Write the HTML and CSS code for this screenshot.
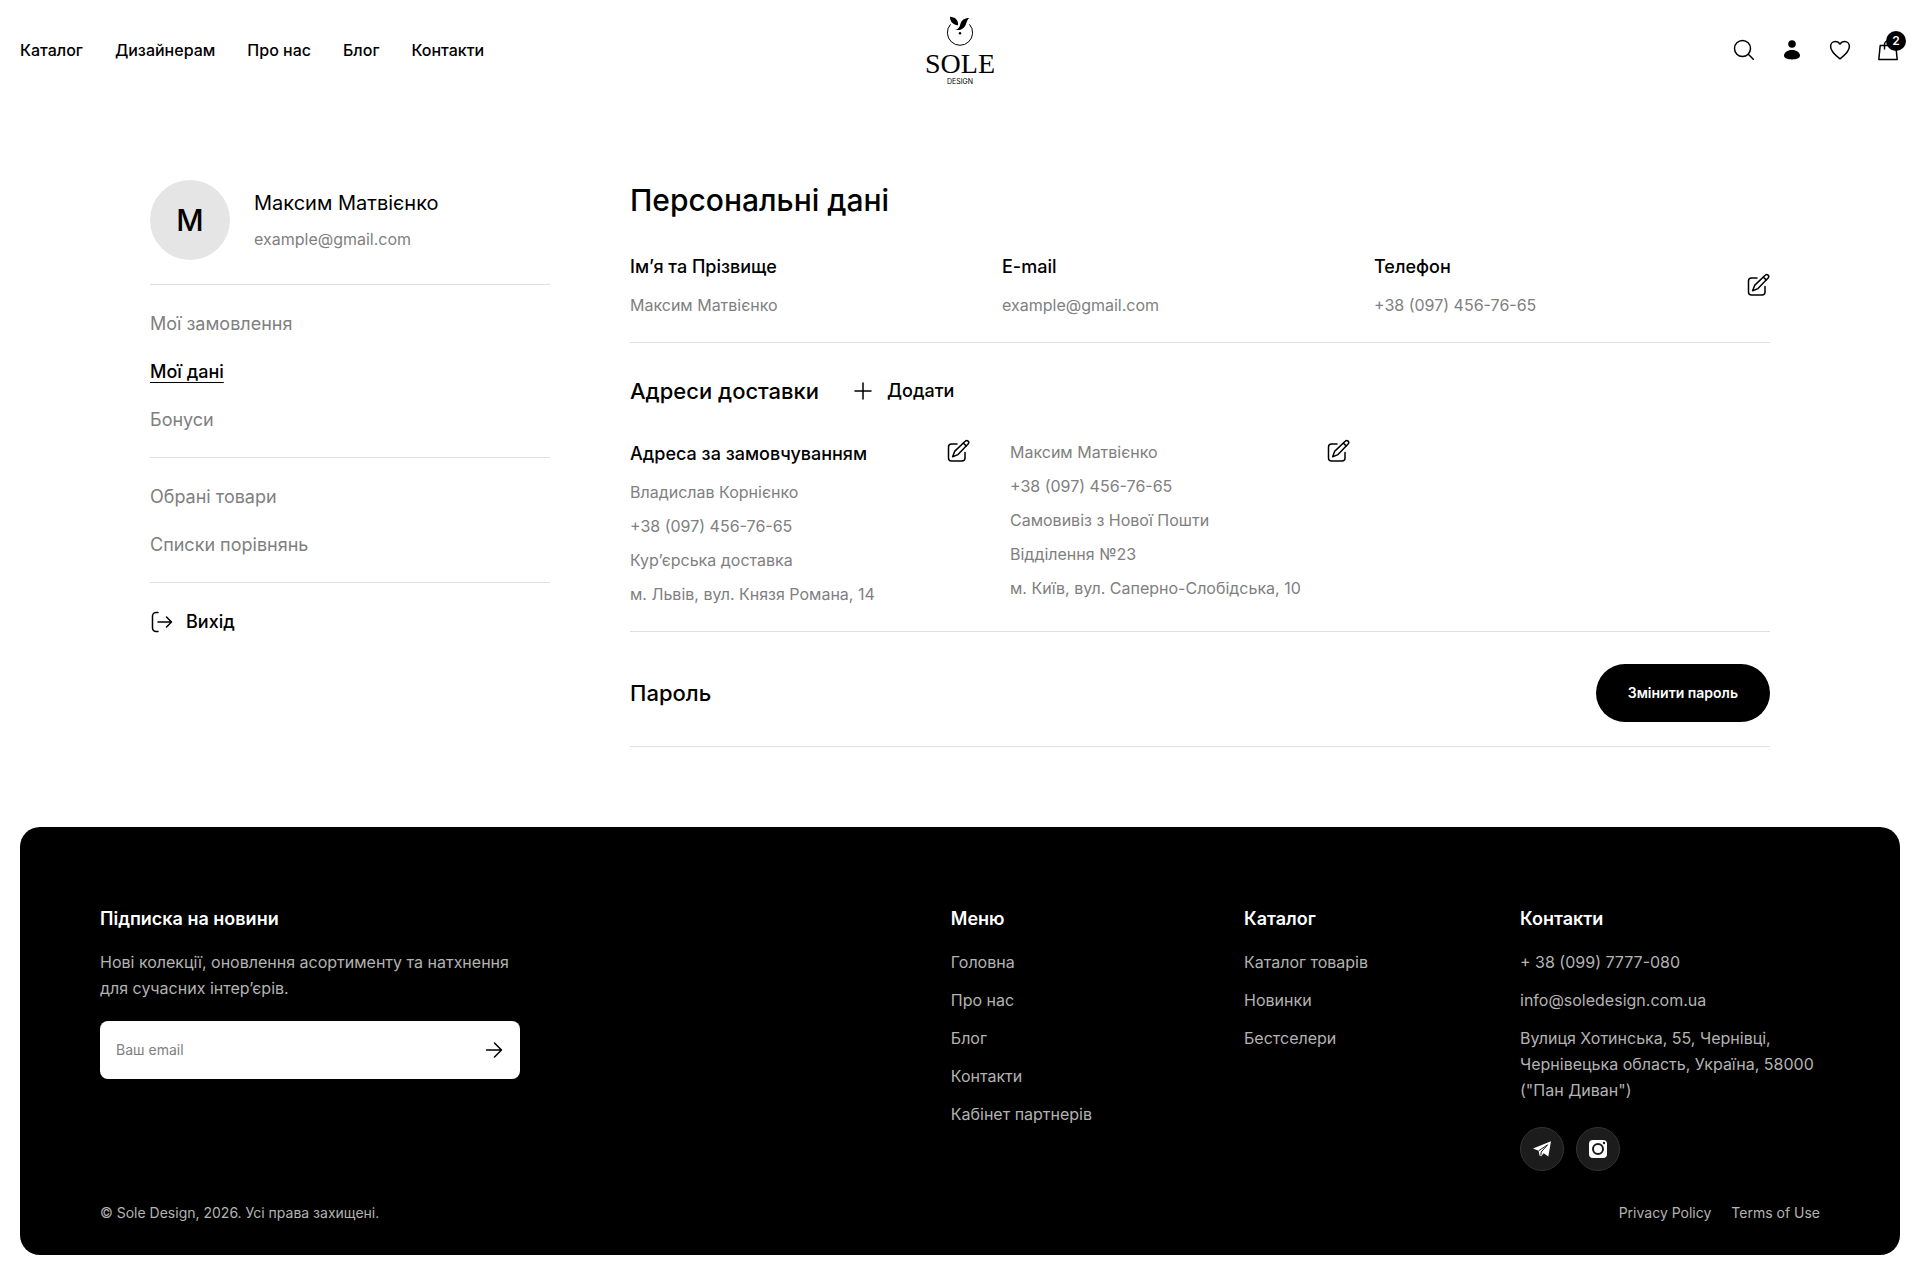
FILE: index.html
```html
<!DOCTYPE html>
<html lang="uk">
<head>
<meta charset="utf-8">
<meta name="viewport" content="width=device-width, initial-scale=1">
<title>Персональні дані — Sole Design</title>
<link rel="stylesheet" href="styles.css">
</head>
<body>
<svg class="sprite" aria-hidden="true">
  <symbol id="icon-edit" viewBox="0 0 24 24">
    <path d="M11 5H5.500A3 3 0 0 0 2.500 8v11a3 3 0 0 0 3 3H16a3 3 0 0 0 3-3v-5.500"/>
    <path d="M19.200 2.200a2 2 0 0 1 2.900 2.800L12 15.600 6.600 17.800 8.600 12.400z"/>
    <path d="M17.400 4.200l2.800 2.700"/>
  </symbol>
</svg>

<header class="header">
  <nav class="nav" aria-label="Головне меню">
    <a href="#">Каталог</a>
    <a href="#">Дизайнерам</a>
    <a href="#">Про нас</a>
    <a href="#">Блог</a>
    <a href="#">Контакти</a>
  </nav>
  <a class="logo" href="#">
    <svg class="logo-mark" viewBox="0 -1 32 35" aria-hidden="true">
      <path d="M6.500 8.400A12.600 12.600 0 1 0 25.500 8.400" fill="none" stroke="#000" stroke-width="1"/>
      <path d="M6 .8c5 .3 8.400 3 8 8.400C9.500 9.300 6 6 6 .8z"/>
      <path d="M25.500 1.900c-2.500 1-2.600 5-4.300 7.800-2 3.500-5.600 5-10.400 4.200 4-.8 4.700-2.900 5.600-6C17.400 4 20.500 1.800 25.500 1.900z"/>
      <circle cx="16" cy="17.300" r="1.200"/>
    </svg>
    <span class="logo-name">SOLE</span>
    <span class="logo-sub">DESIGN</span>
  </a>
  <div class="tools">
    <button class="tool" type="button" aria-label="Пошук">
      <svg class="icon" viewBox="0 0 24 24"><circle cx="10.500" cy="10.500" r="8"/><path d="M16.300 16.300l5 5"/></svg>
    </button>
    <a class="tool" href="#" aria-label="Кабінет">
      <svg class="icon icon-solid" viewBox="0 0 24 24"><circle cx="12" cy="6" r="3.800"/><path d="M12 12c4.600 0 8 2.500 8 5.600 0 2.600-3.500 3.900-8 3.900s-8-1.300-8-3.900C4 14.500 7.400 12 12 12z"/></svg>
    </a>
    <a class="tool" href="#" aria-label="Обране">
      <svg class="icon" viewBox="0 0 24 24"><path d="M12 20.800C7.500 17.500 2.600 13.500 2.600 8.600c0-3 2-5.100 4.700-5.100 2 0 3.700 1 4.700 2.700 1-1.700 2.700-2.700 4.700-2.700 2.700 0 4.700 2.100 4.700 5.100 0 4.900-4.900 8.900-9.400 12.200z"/></svg>
    </a>
    <a class="tool" href="#" aria-label="Кошик">
      <svg class="icon" viewBox="0 0 24 24"><path d="M4.200 7.500h15.600l1.400 14H2.800z"/><path d="M8.500 11V6.500a3.500 3.500 0 0 1 7 0V11"/></svg>
      <span class="badge">2</span>
    </a>
  </div>
</header>

<main class="account">
  <aside class="sidebar">
    <div class="profile">
      <div class="avatar">М</div>
      <div class="profile-text">
        <div class="profile-name">Максим Матвієнко</div>
        <div class="text">example@gmail.com</div>
      </div>
    </div>
    <nav class="side-nav" aria-label="Кабінет">
      <a href="#">Мої замовлення</a>
      <a class="active" href="#" aria-current="page">Мої дані</a>
      <a href="#">Бонуси</a>
    </nav>
    <nav class="side-nav" aria-label="Списки">
      <a href="#">Обрані товари</a>
      <a href="#">Списки порівнянь</a>
    </nav>
    <div class="side-nav">
      <button class="text-button" type="button">
        <svg class="icon" viewBox="0 0 24 24"><path d="M8 2.500H6A3.500 3.500 0 0 0 2.500 6v12A3.500 3.500 0 0 0 6 21.500h2M8 12h13.500M16.500 7l5 5-5 5"/></svg>
        Вихід
      </button>
    </div>
  </aside>

  <div class="content">
    <section class="section">
      <h1>Персональні дані</h1>
      <div class="person">
        <dl class="fields">
          <div class="field"><dt>Ім’я та Прізвище</dt><dd>Максим Матвієнко</dd></div>
          <div class="field"><dt>E-mail</dt><dd>example@gmail.com</dd></div>
          <div class="field"><dt>Телефон</dt><dd>+38 (097) 456-76-65</dd></div>
        </dl>
        <button class="icon-button" type="button" aria-label="Редагувати дані"><svg class="icon"><use href="#icon-edit"/></svg></button>
      </div>
    </section>

    <section class="section section-next">
      <div class="section-head">
        <h2>Адреси доставки</h2>
        <button class="text-button" type="button">
          <svg class="icon" viewBox="0 0 24 24"><path d="M12 4v16M4 12h16"/></svg>
          Додати
        </button>
      </div>
      <div class="addresses">
        <article class="address">
          <div>
            <h3>Адреса за замовчуванням</h3>
            <ul class="lines">
              <li>Владислав Корнієнко</li>
              <li>+38 (097) 456-76-65</li>
              <li>Кур’єрська доставка</li>
              <li>м. Львів, вул. Князя Романа, 14</li>
            </ul>
          </div>
          <button class="icon-button" type="button" aria-label="Редагувати адресу"><svg class="icon"><use href="#icon-edit"/></svg></button>
        </article>
        <article class="address">
          <ul class="lines">
            <li>Максим Матвієнко</li>
            <li>+38 (097) 456-76-65</li>
            <li>Самовивіз з Нової Пошти</li>
            <li>Відділення №23</li>
            <li>м. Київ, вул. Саперно-Слобідська, 10</li>
          </ul>
          <button class="icon-button" type="button" aria-label="Редагувати адресу"><svg class="icon"><use href="#icon-edit"/></svg></button>
        </article>
      </div>
    </section>

    <section class="section section-next password">
      <h2>Пароль</h2>
      <button class="primary" type="button">Змінити пароль</button>
    </section>
  </div>
</main>

<footer class="footer">
  <div class="footer-top">
    <form class="subscribe">
      <h4>Підписка на новини</h4>
      <p>Нові колекції, оновлення асортименту та натхнення для сучасних інтер’єрів.</p>
      <div class="email-box">
        <input type="email" placeholder="Ваш email" aria-label="Ваш email">
        <button class="icon-button" type="submit" aria-label="Підписатися">
          <svg class="icon icon-small" viewBox="0 0 20 20"><path d="M2.500 10h15M10.500 3l7 7-7 7"/></svg>
        </button>
      </div>
    </form>
    <nav class="footer-col" aria-label="Меню">
      <h4>Меню</h4>
      <ul>
        <li><a href="#">Головна</a></li>
        <li><a href="#">Про нас</a></li>
        <li><a href="#">Блог</a></li>
        <li><a href="#">Контакти</a></li>
        <li><a href="#">Кабінет партнерів</a></li>
      </ul>
    </nav>
    <nav class="footer-col" aria-label="Каталог">
      <h4>Каталог</h4>
      <ul>
        <li><a href="#">Каталог товарів</a></li>
        <li><a href="#">Новинки</a></li>
        <li><a href="#">Бестселери</a></li>
      </ul>
    </nav>
    <div class="footer-col contacts">
      <h4>Контакти</h4>
      <ul>
        <li><a href="#">+ 38 (099) 7777-080</a></li>
        <li><a href="#">info@soledesign.com.ua</a></li>
        <li>Вулиця Хотинська, 55, Чернівці, Чернівецька область, Україна, 58000 ("Пан Диван")</li>
      </ul>
      <div class="social">
        <a href="#" aria-label="Telegram">
          <svg viewBox="0 0 20 20" width="20" height="20"><path d="M1 9.600 19 2.200l-2.700 15.200-4.600-3.200-2.500 3-1.700-.6-.9-4.800z" fill="#fff"/><path d="M6.600 11.800 15.600 5.800" stroke="#1c1c1c" stroke-width="1" fill="none"/><path d="M15.600 5.800 9.200 13l-.4 3.400" stroke="#1c1c1c" stroke-width="1" fill="none"/></svg>
        </a>
        <a href="#" aria-label="Instagram">
          <svg viewBox="0 0 20 20" width="20" height="20"><rect x="1" y="1" width="18" height="18" rx="4" fill="#fff"/><circle cx="10" cy="10" r="5" fill="none" stroke="#1c1c1c" stroke-width="2"/><circle cx="16" cy="4" r="1.200" fill="#1c1c1c"/></svg>
        </a>
      </div>
    </div>
  </div>
  <div class="footer-bottom">
    <span>© Sole Design, 2026. Усі права захищені.</span>
    <div class="legal"><a href="#">Privacy Policy</a><a href="#">Terms of Use</a></div>
  </div>
</footer>
</body>
</html>
```

FILE: styles.css
```css
* {
  box-sizing: border-box;
}

body {
  margin: 0;
  background: #fff;
  color: #000;
  font: 400 16px/26px Inter, "Liberation Sans", sans-serif;
}

h1, h2, h3, h4, p, ul, dl, dd {
  margin: 0;
  padding: 0;
  font-weight: 500;
}

p, ul, dd {
  font-weight: 400;
}

ul {
  list-style: none;
}

a {
  color: inherit;
  text-decoration: none;
}

button {
  padding: 0;
  border: 0;
  background: none;
  color: inherit;
  font: inherit;
  cursor: pointer;
}

.sprite {
  display: none;
}

.icon {
  display: block;
  flex: none;
  width: 24px;
  height: 24px;
  fill: none;
  stroke: #000;
  stroke-width: 1.5;
  stroke-linecap: round;
  stroke-linejoin: round;
}

.icon-solid {
  fill: #000;
  stroke: none;
}

.icon-small {
  width: 20px;
  height: 20px;
}

/* Header */

.header {
  display: grid;
  grid-template-columns: 1fr auto 1fr;
  align-items: center;
  min-height: 100px;
  padding: 0 20px;
}

.nav {
  display: flex;
  gap: 32px;
  font-weight: 500;
}

.logo {
  display: flex;
  flex-direction: column;
  align-items: center;
}

.logo-mark {
  width: 32px;
  height: 35px;
}

.logo-name {
  font: 400 28px/28px "Liberation Serif", serif;
}

.logo-sub {
  font-size: 7px;
  line-height: 8px;
}

.tools {
  display: flex;
  justify-content: flex-end;
  gap: 24px;
}

.tool {
  position: relative;
}

.badge {
  position: absolute;
  top: -7px;
  right: -6px;
  width: 20px;
  height: 20px;
  border-radius: 50%;
  background: #000;
  color: #fff;
  font-size: 12px;
  font-weight: 600;
  line-height: 20px;
  text-align: center;
}

/* Account page */

.account {
  display: grid;
  grid-template-columns: 400px 1fr;
  gap: 80px;
  max-width: 1620px;
  margin: 0 auto;
  padding: 80px 0;
}

.profile {
  display: flex;
  align-items: center;
  gap: 24px;
  padding-bottom: 24px;
}

.avatar {
  width: 80px;
  height: 80px;
  border-radius: 50%;
  background: #e5e5e5;
  font-size: 30px;
  font-weight: 500;
  line-height: 80px;
  text-align: center;
}

.profile-text {
  display: grid;
  gap: 8px;
}

.profile-name {
  font-size: 20px;
  line-height: 30px;
}

.text,
.field dd,
.lines {
  color: #808080;
}

.side-nav {
  display: flex;
  flex-direction: column;
  align-items: flex-start;
  gap: 18px;
  padding: 24px 0 22px;
  border-top: 1px solid #e0e0e0;
  color: #808080;
  font-size: 18px;
  line-height: 30px;
}

.side-nav .active {
  color: #000;
  font-weight: 500;
  text-decoration: underline;
  text-decoration-thickness: 1px;
  text-decoration-skip-ink: none;
  text-underline-offset: 4px;
}

.text-button {
  display: flex;
  align-items: center;
  gap: 12px;
  color: #000;
  font-size: 18px;
  font-weight: 500;
  line-height: 30px;
}

.section {
  padding-bottom: 24px;
  border-bottom: 1px solid #e0e0e0;
}

.section-next {
  padding-top: 32px;
}

h1 {
  margin-bottom: 32px;
  font-size: 30px;
  line-height: 40px;
}

h2 {
  font-size: 22px;
  line-height: 32px;
}

h3,
.field dt {
  margin-bottom: 10px;
  font-size: 18px;
  font-weight: 500;
  line-height: 30px;
}

.person {
  display: flex;
  align-items: center;
}

.fields {
  display: grid;
  flex: 1;
  grid-template-columns: repeat(3, 1fr);
}

.section-head {
  display: flex;
  align-items: center;
  gap: 32px;
  margin-bottom: 32px;
}

.addresses {
  display: grid;
  grid-template-columns: repeat(3, 1fr);
}

.address {
  display: flex;
  align-items: flex-start;
  justify-content: space-between;
  padding-right: 40px;
}

.lines {
  display: grid;
  gap: 8px;
}

.password {
  display: flex;
  align-items: center;
  justify-content: space-between;
}

.primary {
  height: 58px;
  padding: 0 32px;
  border-radius: 29px;
  background: #000;
  color: #fff;
  font-size: 14px;
  font-weight: 600;
}

/* Footer */

.footer {
  margin: 0 20px 20px;
  padding: 80px 80px 30px;
  border-radius: 20px;
  background: #000;
  color: #b3b3b3;
}

.footer-top {
  display: flex;
  gap: 152px;
}

.footer h4 {
  margin-bottom: 18px;
  color: #fff;
  font-size: 18px;
  font-weight: 600;
  line-height: 24px;
}

.subscribe {
  width: 420px;
  margin-right: auto;
}

.email-box {
  display: flex;
  align-items: center;
  height: 58px;
  margin-top: 20px;
  padding: 0 16px;
  border-radius: 8px;
  background: #fff;
}

.email-box input {
  flex: 1;
  min-width: 0;
  padding: 0;
  border: 0;
  outline: 0;
  background: none;
  font: 400 14px/24px Inter, "Liberation Sans", sans-serif;
}

.email-box input::placeholder {
  color: #808080;
}

.footer-col ul {
  display: grid;
  gap: 12px;
}

.contacts {
  width: 300px;
}

.social {
  display: flex;
  gap: 12px;
  margin-top: 24px;
}

.social a {
  display: grid;
  place-items: center;
  width: 44px;
  height: 44px;
  border: 1px solid #333;
  border-radius: 50%;
  background: #1c1c1c;
}

.footer-bottom {
  display: flex;
  justify-content: space-between;
  margin-top: 30px;
  font-size: 14px;
  line-height: 24px;
}

.legal {
  display: flex;
  gap: 20px;
}
```
